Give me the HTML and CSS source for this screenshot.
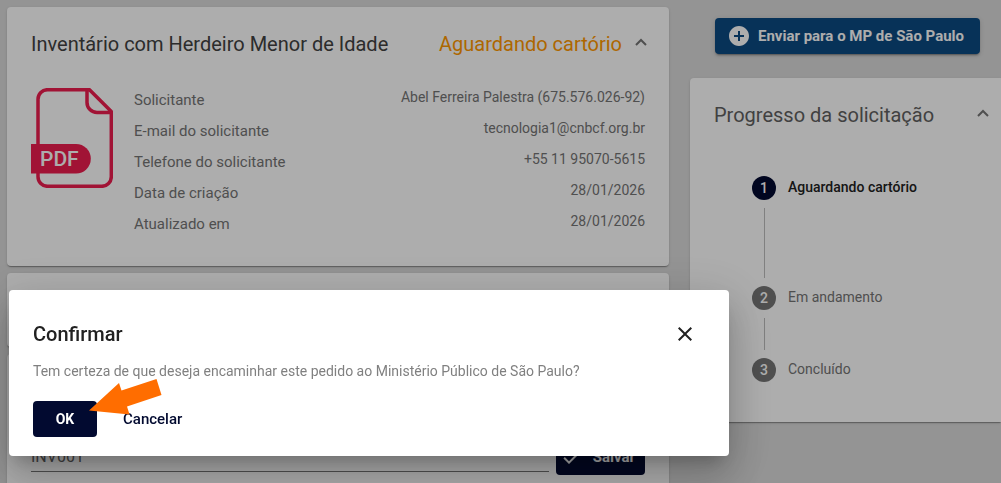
FILE: index.html
```html
<!DOCTYPE html>
<html lang="pt-BR">
  <head>
    <meta charset="UTF-8" />
    <meta name="viewport" content="width=device-width, initial-scale=1.0" />
    <title>Solicitação</title>
    <link rel="stylesheet" href="styles.css">
  </head>
  <body>
    <div class="page">
      <main class="main">
        <section class="card request">
          <div class="card-header">
            <h1 class="card-title">Inventário com Herdeiro Menor de Idade</h1>
            <span class="status">Aguardando cartório</span>
            <button class="toggle" type="button" aria-label="Recolher">
              <svg width="12" height="8" viewBox="0 0 12 8"><path d="M1 7l5-5 5 5" /></svg>
            </button>
          </div>
          <div class="request-body">
            <svg class="pdf" width="82" height="100" viewBox="0 0 82 100" role="img" aria-label="PDF">
              <path class="pdf-line" d="M58 1.7H16.500a9.500 9.500 0 0 0-9.500 9.500V88.800a9.500 9.500 0 0 0 9.500 9.500H70.800a9.500 9.500 0 0 0 9.500-9.500V24.500H66a10 10 0 0 1-10-10V1.700h2.500L80.300 23.500v2" />
              <path class="pdf-band" d="M0 56h45a14.800 14.800 0 0 1 0 29.600H0z" />
              <text class="pdf-text" x="9" y="78">PDF</text>
            </svg>
            <dl class="details">
              <div class="detail"><dt>Solicitante</dt><dd>Abel Ferreira Palestra (675.576.026-92)</dd></div>
              <div class="detail"><dt>E-mail do solicitante</dt><dd>tecnologia1@cnbcf.org.br</dd></div>
              <div class="detail"><dt>Telefone do solicitante</dt><dd>+55 11 95070-5615</dd></div>
              <div class="detail"><dt>Data de criação</dt><dd>28/01/2026</dd></div>
              <div class="detail"><dt>Atualizado em</dt><dd>28/01/2026</dd></div>
            </dl>
          </div>
        </section>

        <section class="card empty"></section>

        <section class="card">
          <form class="protocol">
            <input class="protocol-input" type="text" value="INV001" aria-label="Protocolo">
            <button class="btn btn-save" type="button">
              <svg width="24" height="24" viewBox="0 0 24 24"><path d="M9 16.170L4.830 12l-1.420 1.410L9 19 21 7l-1.410-1.410z" /></svg>
              Salvar
            </button>
          </form>
        </section>
      </main>

      <aside class="side">
        <button class="btn btn-send" type="button">
          <svg width="24" height="24" viewBox="0 0 24 24"><path d="M12 2C6.480 2 2 6.480 2 12s4.480 10 10 10 10-4.480 10-10S17.520 2 12 2zm5 11h-4v4h-2v-4H7v-2h4V7h2v4h4v2z" /></svg>
          Enviar para o MP de São Paulo
        </button>
        <section class="card progress">
          <div class="card-header">
            <h2 class="card-title">Progresso da solicitação</h2>
            <button class="toggle" type="button" aria-label="Recolher">
              <svg width="12" height="8" viewBox="0 0 12 8"><path d="M1 7l5-5 5 5" /></svg>
            </button>
          </div>
          <ol class="steps">
            <li class="step current">
              <div class="marker"><span class="number">1</span></div>
              <span class="step-label">Aguardando cartório</span>
            </li>
            <li class="step">
              <div class="marker"><span class="number">2</span></div>
              <span class="step-label">Em andamento</span>
            </li>
            <li class="step">
              <div class="marker"><span class="number">3</span></div>
              <span class="step-label">Concluído</span>
            </li>
          </ol>
        </section>
      </aside>
    </div>

    <div class="backdrop"></div>

    <div class="dialog" role="dialog" aria-modal="true" aria-labelledby="dialogTitle">
      <div class="dialog-header">
        <h2 class="dialog-title" id="dialogTitle">Confirmar</h2>
        <button class="close" type="button" aria-label="Fechar">
          <svg width="24" height="24" viewBox="0 0 24 24"><path d="M19 6.410L17.590 5 12 10.590 6.410 5 5 6.410 10.590 12 5 17.590 6.410 19 12 13.410 17.590 19 19 17.590 13.410 12z" /></svg>
        </button>
      </div>
      <p class="dialog-text">Tem certeza de que deseja encaminhar este pedido ao Ministério Público de São Paulo?</p>
      <div class="dialog-actions">
        <button class="btn btn-ok" type="button">OK</button>
        <button class="btn btn-cancel" type="button">Cancelar</button>
      </div>
      <svg class="arrow" width="74" height="38" viewBox="0 0 74 38" aria-hidden="true">
        <path d="M0 31.500L30 4l2.500 7.500L67.500 0l5 16L38 27.500l2.500 8z" />
      </svg>
    </div>
  </body>
</html>
```
FILE: styles.css
```css
* {
  box-sizing: border-box;
}
html, body {
  height: 100%;
}
body {
  margin: 0;
  overflow: hidden;
  font-family: Roboto, "Liberation Sans", sans-serif;
  font-size: 14px;
  color: #212121;
  background-color: #dadada;
}
h1, h2, p, dl, dd, ol {
  margin: 0;
  padding: 0;
}
button {
  font-family: inherit;
  border: none;
  cursor: pointer;
}
svg {
  flex: none;
}

.page {
  display: grid;
  grid-template-columns: 66.6% 1fr;
  gap: 21px;
  padding: 7px 0 0 7px;
}
.main {
  display: flex;
  flex-direction: column;
  gap: 7px;
}
.card {
  padding: 24px;
  background-color: #fff;
  border-radius: 4px;
  box-shadow: 0 2px 1px -1px rgba(0,0,0,0.2), 0 1px 1px rgba(0,0,0,0.14), 0 1px 3px rgba(0,0,0,0.12);
}
.card-header {
  display: flex;
  align-items: center;
  height: 26px;
}
.card-title {
  flex: 1;
  font-size: 20px;
  font-weight: 400;
  white-space: nowrap;
  color: #424242;
}
.status {
  font-size: 20px;
  color: #ff9800;
}
.toggle {
  display: flex;
  margin-left: 13px;
  padding: 0 0 4px;
  background: none;
}
.toggle path {
  fill: none;
  stroke: #757575;
  stroke-width: 2;
}

.request {
  padding-bottom: 26px;
}
.request .card-header {
  margin-right: -2px;
}
.request-body {
  display: flex;
  gap: 21px;
  padding-top: 28px;
}
.pdf {
  margin-top: 3px;
}
.pdf-line {
  fill: none;
  stroke: #ee1c4e;
  stroke-width: 3.5;
  stroke-linejoin: round;
}
.pdf-band {
  fill: #ee1c4e;
}
.pdf-text {
  fill: #fff;
  font-size: 21px;
  font-weight: 500;
}
.details {
  flex: 1;
  color: #757575;
}
.detail {
  display: flex;
  justify-content: space-between;
}
.detail dt {
  font-size: 15px;
  line-height: 31px;
}
.detail dd {
  line-height: 24px;
}

.empty {
  height: 74px;
}
.protocol {
  display: flex;
  gap: 7px;
  align-items: flex-end;
  padding-top: 61px;
}
.protocol-input {
  flex: 1;
  min-width: 0;
  height: 30px;
  margin-bottom: 3px;
  padding: 0;
  border: none;
  border-bottom: 1px solid #757575;
  background: none;
  font-family: inherit;
  font-size: 16px;
  color: #616161;
}

.btn {
  display: flex;
  align-items: center;
  height: 36px;
  border-radius: 4px;
  font-size: 15px;
  font-weight: 500;
  white-space: nowrap;
}
.btn svg {
  fill: currentColor;
}
.btn-save {
  gap: 9px;
  padding: 0 10px 0 4px;
  color: #fff;
  background-color: #020a30;
  font-weight: 700;
}
.btn-send {
  gap: 7px;
  margin-left: 25px;
  padding: 0 16px 0 12px;
  color: #fff;
  background-color: #0b4a82;
  font-weight: 700;
  box-shadow: 0 3px 1px -2px rgba(0,0,0,0.2), 0 2px 2px rgba(0,0,0,0.14), 0 1px 5px rgba(0,0,0,0.12);
}

.side {
  display: flex;
  flex-direction: column;
  align-items: flex-start;
  gap: 24px;
  padding-top: 11px;
}
.progress {
  width: 100%;
  padding: 24px 12px 40px 24px;
  border-radius: 4px 0 0 4px;
}
.progress .card-title {
  color: #616161;
}
.steps {
  padding: 48px 0 0 38px;
  list-style: none;
}
.step {
  display: flex;
  gap: 12px;
  min-height: 72px;
  color: #757575;
}
.step:last-child {
  min-height: 24px;
}
.step.current {
  min-height: 110px;
  color: #212121;
  font-weight: 500;
}
.marker {
  display: flex;
  flex-direction: column;
  align-items: center;
}
.number {
  width: 24px;
  border-radius: 50%;
  line-height: 24px;
  text-align: center;
  font-weight: 500;
  color: #fff;
  background-color: #757575;
}
.current .number {
  background-color: #020a30;
}
.step:not(:last-child) .marker::after {
  content: "";
  flex: 1;
  width: 1px;
  margin: 8px 0;
  background-color: #bdbdbd;
}
.step-label {
  line-height: 22px;
}

.backdrop {
  position: fixed;
  inset: 0;
  background-color: rgba(0,0,0,0.32);
}
.dialog {
  position: fixed;
  top: 290px;
  left: 9px;
  width: calc(100% - 18px);
  max-width: 720px;
  padding: 24px 24px 19px;
  background-color: #fff;
  border-radius: 4px;
  box-shadow: 0 11px 15px -7px rgba(0,0,0,0.2), 0 24px 38px 3px rgba(0,0,0,0.14), 0 9px 46px 8px rgba(0,0,0,0.12);
}
.dialog-header {
  display: flex;
  align-items: center;
  justify-content: space-between;
  height: 40px;
}
.dialog-title {
  font-size: 20px;
  font-weight: 500;
}
.close {
  display: flex;
  padding: 8px;
  background: none;
}
.close path {
  fill: #212121;
}
.dialog-text {
  padding-top: 7px;
  line-height: 20px;
  color: #808080;
}
.dialog-actions {
  display: flex;
  gap: 10px;
  padding-top: 20px;
}
.btn-ok {
  justify-content: center;
  min-width: 64px;
  font-size: 14px;
  color: #fff;
  background-color: #020a30;
  font-weight: 700;
}
.btn-cancel {
  padding: 0 16px;
  color: #020a30;
  background: none;
}
.arrow {
  position: absolute;
  top: 89px;
  left: 80px;
  fill: #ff6d00;
}
```
